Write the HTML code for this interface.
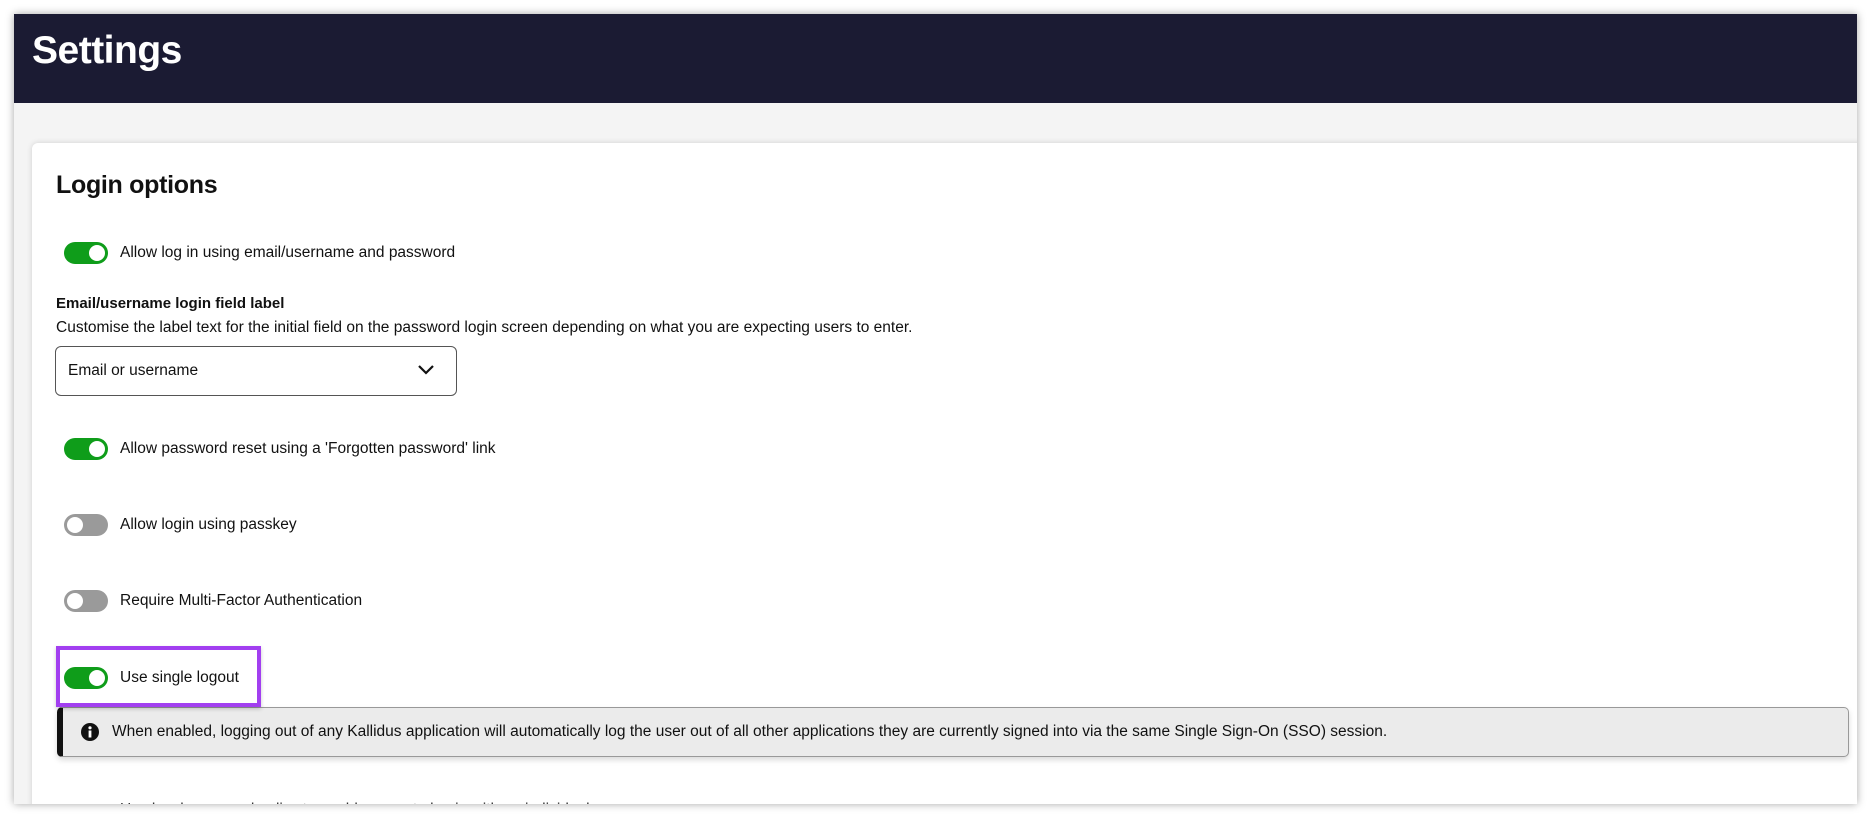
<!DOCTYPE html>
<html><head><meta charset="utf-8"><style>
*{box-sizing:border-box;margin:0;padding:0}
body{width:1870px;height:818px;background:#fff;font-family:"Liberation Sans",sans-serif;color:#111;position:relative;overflow:hidden}
.win{position:absolute;left:14px;top:14px;width:1843px;height:790px;background:#f4f4f4;box-shadow:0 0 8px rgba(0,0,0,.35);overflow:hidden}
.hdr{position:absolute;left:0;top:0;width:100%;height:89px;background:#1b1b33}
.hdr h1{position:absolute;left:18px;top:15px;color:#fff;font-size:39px;font-weight:bold;letter-spacing:-0.5px}
.card{position:absolute;left:18px;top:129px;width:1840px;height:700px;background:#fff;border-radius:6px;box-shadow:0 0 6px rgba(0,0,0,.15)}
.abs{position:absolute}
.t{position:absolute;left:26px;width:44px;height:22px;border-radius:11px;background:#0f9d1a}
.t::after{content:"";position:absolute;right:3px;top:3px;width:16px;height:16px;border-radius:50%;background:#fff}
.t.off{background:#9a9a9a}
.t.off::after{left:3px;right:auto}
.lbl{position:absolute;left:88px;font-size:15.5px;line-height:20px}
</style></head><body>
<div class="win">
 <div class="hdr"><h1>Settings</h1></div>
 <div class="card">
  <div class="abs" style="left:24px;top:28px;font-size:25px;font-weight:bold;letter-spacing:-0.3px">Login options</div>
  <div class="t" style="top:99px;left:32px"></div><div class="lbl" style="top:100px">Allow log in using email/username and password</div>
  <div class="abs" style="left:24px;top:152px;font-size:15px;font-weight:bold">Email/username login field label</div>
  <div class="abs" style="left:24px;top:176px;font-size:15.5px">Customise the label text for the initial field on the password login screen depending on what you are expecting users to enter.</div>
  <div class="abs" style="left:23px;top:203px;width:402px;height:50px;border:1px solid #555;border-radius:6px">
   <span class="abs" style="left:12px;top:15px;font-size:15.5px">Email or username</span>
   <svg class="abs" style="left:361px;top:17px" width="18" height="12" viewBox="0 0 18 12"><path d="M2 2l7 7 7-7" fill="none" stroke="#111" stroke-width="2.2"/></svg>
  </div>
  <div class="t" style="top:295px;left:32px"></div><div class="lbl" style="top:296px">Allow password reset using a 'Forgotten password' link</div>
  <div class="t off" style="top:371px;left:32px"></div><div class="lbl" style="top:372px">Allow login using passkey</div>
  <div class="t off" style="top:447px;left:32px"></div><div class="lbl" style="top:448px">Require Multi-Factor Authentication</div>
  <div class="t" style="top:524px;left:32px"></div><div class="lbl" style="top:525px">Use single logout</div>
  <div class="abs" style="left:25px;top:564px;width:1792px;height:50px;background:#ebebeb;border:1px solid #999;border-left:6px solid #111;border-radius:5px;box-shadow:0 3px 6px rgba(0,0,0,.15)">
   <svg class="abs" style="left:18px;top:15px" width="18" height="18" viewBox="0 0 18 18"><circle cx="9" cy="9" r="9" fill="#111"/><rect x="7.6" y="7.5" width="2.8" height="7" fill="#fff"/><circle cx="9" cy="4.8" r="1.6" fill="#fff"/></svg>
   <span class="abs" style="left:49px;top:15px;font-size:15.5px">When enabled, logging out of any Kallidus application will automatically log the user out of all other applications they are currently signed into via the same Single Sign-On (SSO) session.</span>
  </div>
  <div class="abs" style="left:88px;top:658px;font-size:15.5px;color:#333">Use local password policy to enable users to log in with an individual</div>
  <div class="abs" style="left:24px;top:503px;width:205px;height:61px;border:4px solid #a23ff0;box-shadow:0 2px 4px rgba(0,0,0,.2)"></div>
 </div>
</div>
</body></html>
